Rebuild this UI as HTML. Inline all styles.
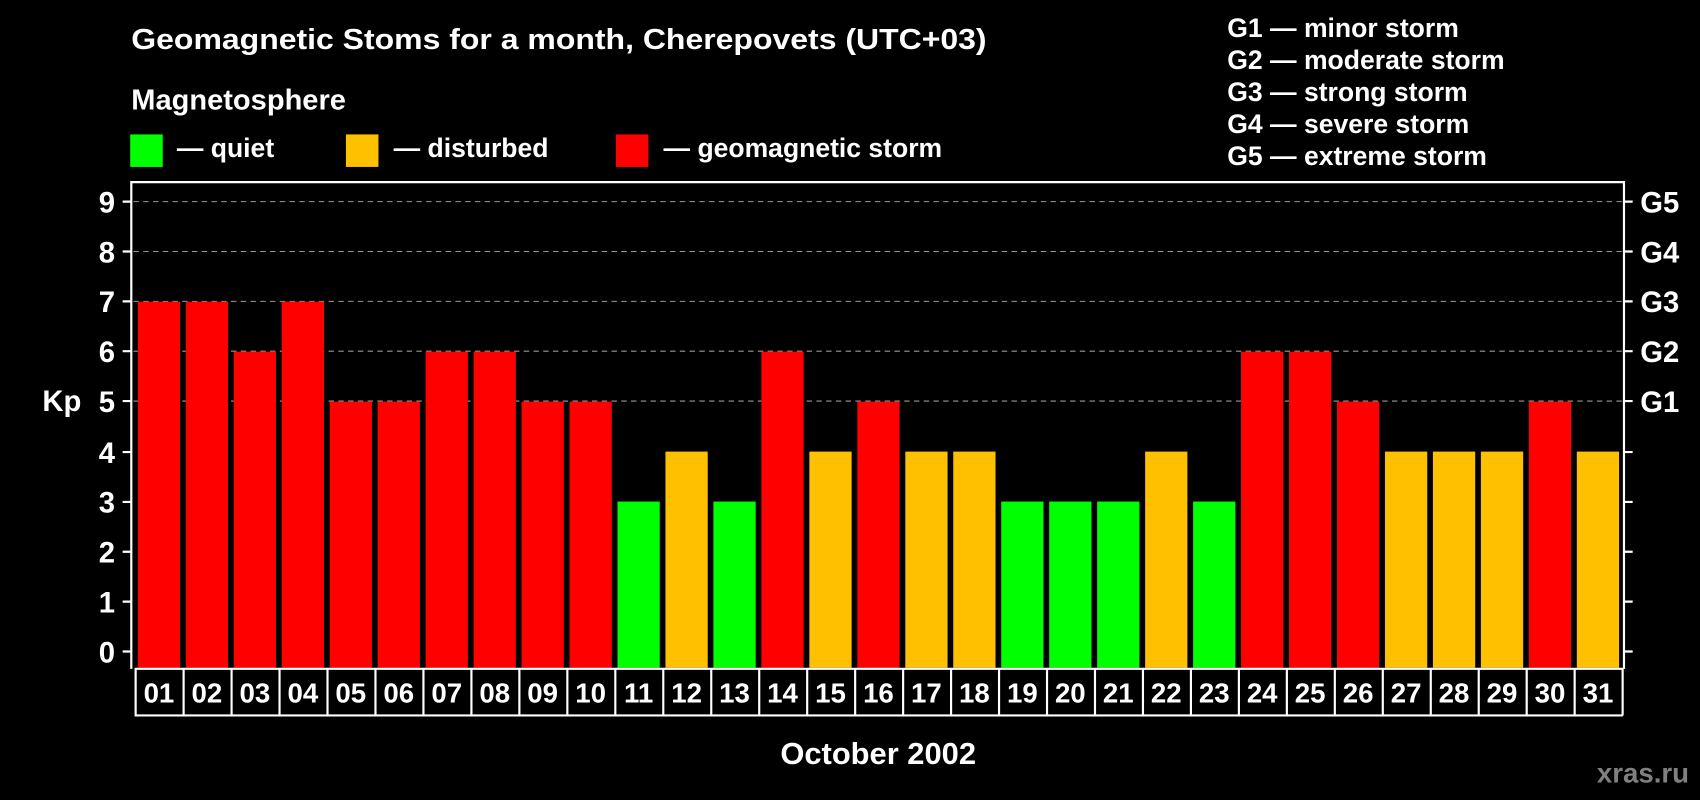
<!DOCTYPE html>
<html><head><meta charset="utf-8"><style>html,body{margin:0;padding:0;background:#000;}svg{display:block}</style></head>
<body>
<svg width="1700" height="800" viewBox="0 0 1568 738" xmlns="http://www.w3.org/2000/svg" font-family="Liberation Sans, Arial, sans-serif" font-weight="bold" fill="#fff">
<rect width="1568" height="738" fill="#000"/>
<text x="121" y="45" font-size="26.5" textLength="789" lengthAdjust="spacingAndGlyphs">Geomagnetic Stoms for a month, Cherepovets (UTC+03)</text>
<text x="121" y="101" font-size="26.5" textLength="198" lengthAdjust="spacingAndGlyphs">Magnetosphere</text>
<rect x="120" y="124" width="30" height="30" fill="#00ff00"/>
<text x="163" y="145" font-size="24.5">— quiet</text>
<rect x="319" y="124" width="30" height="30" fill="#ffc000"/>
<text x="363" y="145" font-size="24.5">— disturbed</text>
<rect x="568" y="124" width="30" height="30" fill="#ff0000"/>
<text x="612" y="145" font-size="24.5" textLength="257" lengthAdjust="spacingAndGlyphs">— geomagnetic storm</text>
<g font-size="24.5">
<text x="1132" y="34">G1 — minor storm</text>
<text x="1132" y="63.5">G2 — moderate storm</text>
<text x="1132" y="93">G3 — strong storm</text>
<text x="1132" y="122.5">G4 — severe storm</text>
<text x="1132" y="152">G5 — extreme storm</text>
</g>
<g stroke="#999" stroke-width="1" stroke-dasharray="5,4">
<line x1="123" y1="186" x2="1497" y2="186"/>
<line x1="123" y1="232" x2="1497" y2="232"/>
<line x1="123" y1="278" x2="1497" y2="278"/>
<line x1="123" y1="324" x2="1497" y2="324"/>
<line x1="123" y1="370" x2="1497" y2="370"/>
</g>
<g>
<rect x="127" y="278.3" width="39" height="337.7" fill="#f00"/>
<rect x="171.25" y="278.3" width="39" height="337.7" fill="#f00"/>
<rect x="215.5" y="324.4" width="39" height="291.6" fill="#f00"/>
<rect x="259.75" y="278.3" width="39" height="337.7" fill="#f00"/>
<rect x="304" y="370.5" width="39" height="245.5" fill="#f00"/>
<rect x="348.25" y="370.5" width="39" height="245.5" fill="#f00"/>
<rect x="392.5" y="324.4" width="39" height="291.6" fill="#f00"/>
<rect x="436.75" y="324.4" width="39" height="291.6" fill="#f00"/>
<rect x="481" y="370.5" width="39" height="245.5" fill="#f00"/>
<rect x="525.25" y="370.5" width="39" height="245.5" fill="#f00"/>
<rect x="569.5" y="462.7" width="39" height="153.3" fill="#0f0"/>
<rect x="613.75" y="416.6" width="39" height="199.4" fill="#ffc000"/>
<rect x="658" y="462.7" width="39" height="153.3" fill="#0f0"/>
<rect x="702.25" y="324.4" width="39" height="291.6" fill="#f00"/>
<rect x="746.5" y="416.6" width="39" height="199.4" fill="#ffc000"/>
<rect x="790.75" y="370.5" width="39" height="245.5" fill="#f00"/>
<rect x="835" y="416.6" width="39" height="199.4" fill="#ffc000"/>
<rect x="879.25" y="416.6" width="39" height="199.4" fill="#ffc000"/>
<rect x="923.5" y="462.7" width="39" height="153.3" fill="#0f0"/>
<rect x="967.75" y="462.7" width="39" height="153.3" fill="#0f0"/>
<rect x="1012" y="462.7" width="39" height="153.3" fill="#0f0"/>
<rect x="1056.25" y="416.6" width="39" height="199.4" fill="#ffc000"/>
<rect x="1100.5" y="462.7" width="39" height="153.3" fill="#0f0"/>
<rect x="1144.75" y="324.4" width="39" height="291.6" fill="#f00"/>
<rect x="1189" y="324.4" width="39" height="291.6" fill="#f00"/>
<rect x="1233.25" y="370.5" width="39" height="245.5" fill="#f00"/>
<rect x="1277.5" y="416.6" width="39" height="199.4" fill="#ffc000"/>
<rect x="1321.75" y="416.6" width="39" height="199.4" fill="#ffc000"/>
<rect x="1366" y="416.6" width="39" height="199.4" fill="#ffc000"/>
<rect x="1410.25" y="370.5" width="39" height="245.5" fill="#f00"/>
<rect x="1454.5" y="416.6" width="39" height="199.4" fill="#ffc000"/>
</g>
<g stroke="#fff" stroke-width="2" fill="none">
<polyline points="121,617 121,168 1498,168 1498,617"/>
<line x1="124" y1="617" x2="1497" y2="617"/>
<line x1="124" y1="660" x2="1497" y2="660"/>
<line x1="125" y1="617" x2="125" y2="660"/><line x1="169.25" y1="617" x2="169.25" y2="660"/><line x1="213.5" y1="617" x2="213.5" y2="660"/><line x1="257.75" y1="617" x2="257.75" y2="660"/><line x1="302" y1="617" x2="302" y2="660"/><line x1="346.25" y1="617" x2="346.25" y2="660"/><line x1="390.5" y1="617" x2="390.5" y2="660"/><line x1="434.75" y1="617" x2="434.75" y2="660"/><line x1="479" y1="617" x2="479" y2="660"/><line x1="523.25" y1="617" x2="523.25" y2="660"/><line x1="567.5" y1="617" x2="567.5" y2="660"/><line x1="611.75" y1="617" x2="611.75" y2="660"/><line x1="656" y1="617" x2="656" y2="660"/><line x1="700.25" y1="617" x2="700.25" y2="660"/><line x1="744.5" y1="617" x2="744.5" y2="660"/><line x1="788.75" y1="617" x2="788.75" y2="660"/><line x1="833" y1="617" x2="833" y2="660"/><line x1="877.25" y1="617" x2="877.25" y2="660"/><line x1="921.5" y1="617" x2="921.5" y2="660"/><line x1="965.75" y1="617" x2="965.75" y2="660"/><line x1="1010" y1="617" x2="1010" y2="660"/><line x1="1054.25" y1="617" x2="1054.25" y2="660"/><line x1="1098.5" y1="617" x2="1098.5" y2="660"/><line x1="1142.75" y1="617" x2="1142.75" y2="660"/><line x1="1187" y1="617" x2="1187" y2="660"/><line x1="1231.25" y1="617" x2="1231.25" y2="660"/><line x1="1275.5" y1="617" x2="1275.5" y2="660"/><line x1="1319.75" y1="617" x2="1319.75" y2="660"/><line x1="1364" y1="617" x2="1364" y2="660"/><line x1="1408.25" y1="617" x2="1408.25" y2="660"/><line x1="1452.5" y1="617" x2="1452.5" y2="660"/><line x1="1496.75" y1="617" x2="1496.75" y2="660"/>
<path d="M113 186H121M113 232H121M113 278H121M113 324H121M113 370H121M113 417H121M113 463H121M113 509H121M113 555H121M113 601H121"/>
<path d="M1498 186H1506M1498 232H1506M1498 278H1506M1498 324H1506M1498 370H1506M1498 417H1506M1498 463H1506M1498 509H1506M1498 555H1506M1498 601H1506"/>
</g>
<g font-size="27" text-anchor="end">
<text x="106" y="196">9</text><text x="106" y="242">8</text><text x="106" y="288">7</text><text x="106" y="334">6</text><text x="106" y="380">5</text><text x="106" y="427">4</text><text x="106" y="473">3</text><text x="106" y="519">2</text><text x="106" y="565">1</text><text x="106" y="611">0</text>
</g>
<g font-size="27">
<text x="1513" y="196">G5</text><text x="1513" y="242">G4</text><text x="1513" y="288">G3</text><text x="1513" y="334">G2</text><text x="1513" y="380">G1</text>
</g>
<text x="39" y="379" font-size="27">Kp</text>
<g font-size="25.5" text-anchor="middle">
<text x="146.5" y="648">01</text><text x="190.75" y="648">02</text><text x="235" y="648">03</text><text x="279.25" y="648">04</text><text x="323.5" y="648">05</text><text x="367.75" y="648">06</text><text x="412" y="648">07</text><text x="456.25" y="648">08</text><text x="500.5" y="648">09</text><text x="544.75" y="648">10</text><text x="589" y="648">11</text><text x="633.25" y="648">12</text><text x="677.5" y="648">13</text><text x="721.75" y="648">14</text><text x="766" y="648">15</text><text x="810.25" y="648">16</text><text x="854.5" y="648">17</text><text x="898.75" y="648">18</text><text x="943" y="648">19</text><text x="987.25" y="648">20</text><text x="1031.5" y="648">21</text><text x="1075.75" y="648">22</text><text x="1120" y="648">23</text><text x="1164.25" y="648">24</text><text x="1208.5" y="648">25</text><text x="1252.75" y="648">26</text><text x="1297" y="648">27</text><text x="1341.25" y="648">28</text><text x="1385.5" y="648">29</text><text x="1429.75" y="648">30</text><text x="1474" y="648">31</text>
</g>
<text x="810" y="705" font-size="28.5" text-anchor="middle">October 2002</text>
<text x="1558" y="722" font-size="25.5" text-anchor="end" fill="#808080">xras.ru</text>
</svg>
</body></html>
